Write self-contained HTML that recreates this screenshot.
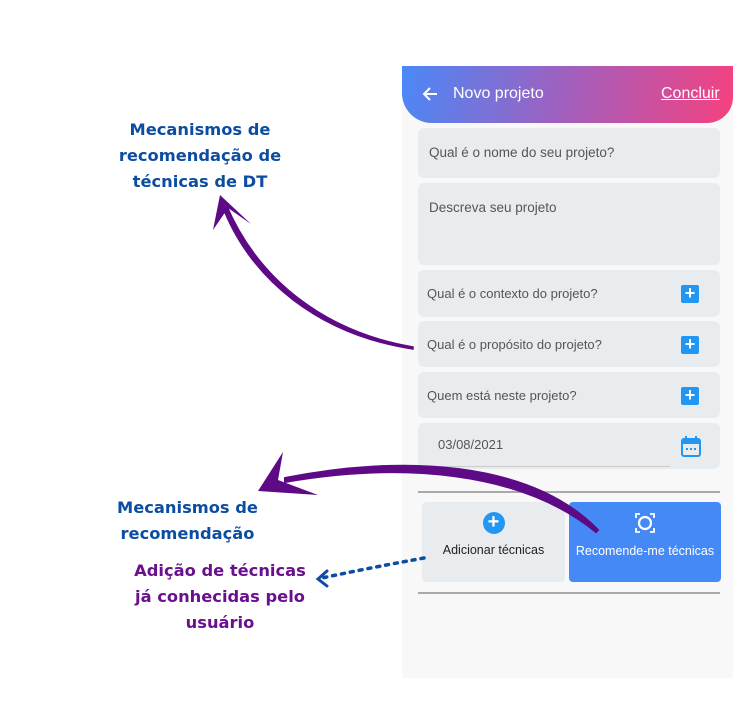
<!DOCTYPE html>
<html><head><meta charset="utf-8"><style>
body{margin:0;width:739px;height:703px;background:#fff;position:relative;overflow:hidden;font-family:"Liberation Sans",Roboto,sans-serif}
.a{position:absolute}
.panel{left:402px;top:66px;width:331px;height:612px;background:#f8f8f8}
.hdr{left:402px;top:66px;width:331px;height:57px;background:linear-gradient(100deg,#4a88f7 0%,#a25fbd 50%,#f6417f 100%);border-radius:0 0 26px 30px;color:#fff;font-size:16px}
.f{position:absolute;left:418px;width:302px;background:#e9ecef;border-radius:6px;color:#555;font-size:13.5px}
.plus{position:absolute;right:21px;width:18px;height:18px;background:#2196f3;border-radius:2px;color:#fff;font-size:18px;line-height:17px;text-align:center;font-weight:bold}
.lbl{position:absolute;font-family:"DejaVu Sans",sans-serif;font-weight:bold;text-align:center;font-size:16.3px;line-height:26px}
</style></head><body>
<div class="a panel"></div>
<div class="a hdr">
 <svg class="a" style="left:20px;top:20px" width="16" height="16" viewBox="0 0 16 16"><path d="M15 8H2M8 2L2 8L8 14" fill="none" stroke="#fff" stroke-width="2"/></svg>
 <span class="a" style="left:51px;top:19px">Novo projeto</span>
 <span class="a" style="left:259px;top:19px;text-decoration:underline">Concluir</span>
</div>
<div class="f" style="top:128px;height:50px"><span class="a" style="left:11px;top:17px">Qual é o nome do seu projeto?</span></div>
<div class="f" style="top:183px;height:82px"><span class="a" style="left:11px;top:17px">Descreva seu projeto</span></div>
<div class="f" style="top:270px;height:47px;font-size:13px"><span class="a" style="left:9px;top:16px">Qual é o contexto do projeto?</span><div class="plus" style="top:15px">+</div></div>
<div class="f" style="top:321px;height:46px;font-size:13px"><span class="a" style="left:9px;top:16px">Qual é o propósito do projeto?</span><div class="plus" style="top:15px">+</div></div>
<div class="f" style="top:372px;height:46px;font-size:13px"><span class="a" style="left:9px;top:16px">Quem está neste projeto?</span><div class="plus" style="top:15px">+</div></div>
<div class="f" style="top:423px;height:46px;font-size:13px"><span class="a" style="left:20px;top:14px">03/08/2021</span>
 <div class="a" style="left:0;top:43px;width:252px;height:1px;background:#ccc"></div>
 <svg class="a" style="left:262px;top:12px" width="22" height="24" viewBox="0 0 22 24"><rect x="2" y="4" width="18" height="17" rx="2" fill="none" stroke="#2196f3" stroke-width="2"/><rect x="2" y="4" width="18" height="5" fill="#2196f3"/><rect x="5" y="1" width="2" height="5" fill="#2196f3"/><rect x="15" y="1" width="2" height="5" fill="#2196f3"/><rect x="6" y="13" width="2" height="2" fill="#2196f3"/><rect x="10" y="13" width="2" height="2" fill="#2196f3"/><rect x="14" y="13" width="2" height="2" fill="#2196f3"/></svg>
</div>
<div class="a" style="left:418px;top:491px;width:302px;height:2px;background:#aaa"></div>
<div class="a" style="left:422px;top:502px;width:143px;height:80px;background:#e9ecef;border-radius:4px;font-size:12.5px;color:#222;text-align:center">
 <div style="margin:10px auto 0;width:22px;height:22px;border-radius:50%;background:#2196f3;color:#fff;font-size:20px;line-height:21px;font-weight:bold">+</div>
 <div style="margin-top:9px">Adicionar técnicas</div></div>
<div class="a" style="left:569px;top:502px;width:152px;height:80px;background:#4589f7;border-radius:4px;font-size:12.5px;color:#fff;text-align:center">
 <svg style="margin-top:11px" width="20" height="20" viewBox="0 0 20 20"><circle cx="10" cy="10" r="6" fill="none" stroke="#fff" stroke-width="2.2"/><path d="M1 5V1H5M15 1H19V5M19 15V19H15M5 19H1V15" fill="none" stroke="#fff" stroke-width="1.8"/></svg>
 <div style="margin-top:8px">Recomende-me técnicas</div></div>
<div class="a" style="left:418px;top:592px;width:302px;height:2px;background:#aaa"></div>

<svg class="a" style="left:0;top:0" width="739" height="703">
 <path d="M413 349 C320 335 250 280 222 205 L226 204 C258 280 325 332 413 347Z" fill="#5e0a86" stroke="#5e0a86" stroke-width="1.5"/>
 <path d="M213 230 L220 195 L251 224 L228 208Z" fill="#5e0a86"/>
 <path d="M598 530 C530 460 400 455 285 478 L285 482 C400 462 520 470 596 532Z" fill="#5e0a86" stroke="#5e0a86" stroke-width="2"/>
 <path d="M258 491 L283 452 L278 480 L318 495Z" fill="#5e0a86"/>
 <path d="M424 558 C380 566 350 572 322 578" fill="none" stroke="#0c4da2" stroke-width="3.5" stroke-dasharray="3 6" stroke-linecap="round"/>
 <path d="M327 571 L318 579 L327 586" fill="none" stroke="#0c4da2" stroke-width="3" stroke-linecap="round"/>
</svg>
<div class="lbl" style="left:100px;top:117px;width:200px;color:#0c4da2">Mecanismos de<br>recomendação de<br>técnicas de DT</div>
<div class="lbl" style="left:100px;top:495px;width:175px;color:#0c4da2">Mecanismos de<br>recomendação</div>
<div class="lbl" style="left:125px;top:558px;width:190px;color:#6a0f8e">Adição de técnicas<br>já conhecidas pelo<br>usuário</div>
</body></html>
